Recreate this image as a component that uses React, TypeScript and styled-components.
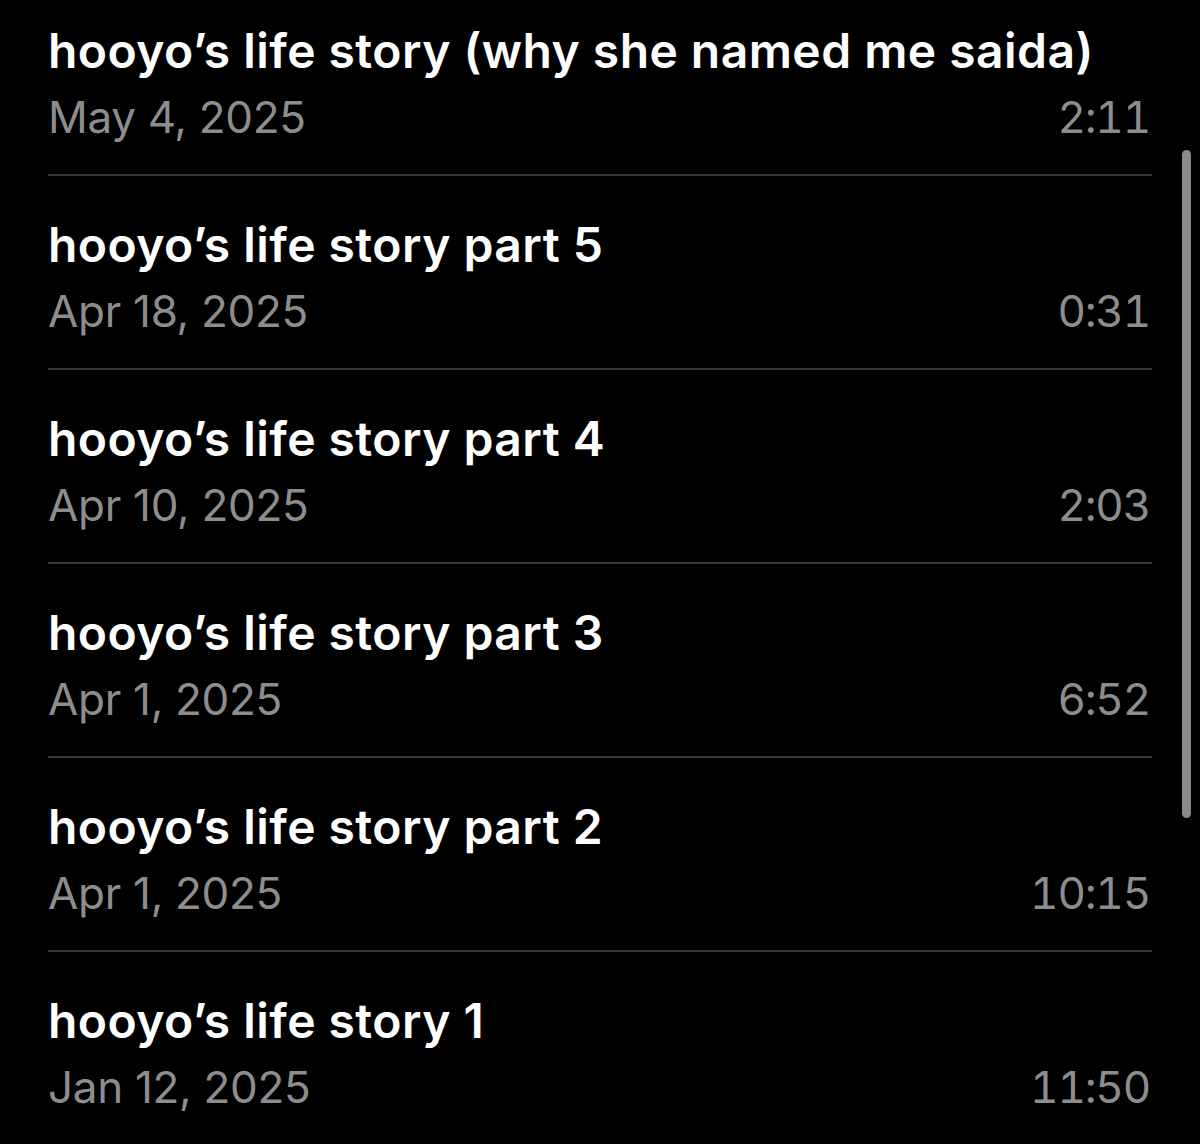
import React from "react";
import styled, { createGlobalStyle } from "styled-components";

const Global = createGlobalStyle`
  html, body { margin: 0; padding: 0; background: #000; }
  body { overflow: hidden; height: 1144px; font-family: Inter, "Noto Sans", sans-serif; }
`;

const Screen = styled.div`
  position: relative;
  width: 1200px;
  height: 1144px;
  background: #000;
  overflow: hidden;
`;

const List = styled.div`
  display: flex;
  flex-direction: column;
  margin-top: -18px;
  padding: 0 48px;
`;

const Row = styled.div`
  display: flex;
  flex-direction: column;
  height: 194px;
  box-sizing: border-box;
  padding-top: 39px;
  border-bottom: 2px solid #38383a;
`;

const Title = styled.div`
  color: #fff;
  font-size: 48px;
  font-weight: 600;
  line-height: 60px;
  letter-spacing: 0.45px;
  white-space: nowrap;
`;

const Meta = styled.div`
  display: flex;
  justify-content: space-between;
  align-items: baseline;
  color: #8d8d8f;
  font-size: 44px;
  font-weight: 400;
  line-height: 60px;
  margin-top: 6px;
  padding-right: 2px;
`;

const DateText = styled.span`
  letter-spacing: -0.3px;
`;

const Duration = styled.span`
  font-variant-numeric: tabular-nums;
  letter-spacing: -1.2px;
`;

const ScrollThumb = styled.div`
  position: absolute;
  left: 1182px;
  top: 150px;
  width: 9px;
  height: 668px;
  border-radius: 5px;
  background: #8a8a8a;
`;

const items = [
  { t: "hooyo’s life story (why she named me saida)", d: "May 4, 2025", l: "2:11" },
  { t: "hooyo’s life story part 5", d: "Apr 18, 2025", l: "0:31" },
  { t: "hooyo’s life story part 4", d: "Apr 10, 2025", l: "2:03" },
  { t: "hooyo’s life story part 3", d: "Apr 1, 2025", l: "6:52" },
  { t: "hooyo’s life story part 2", d: "Apr 1, 2025", l: "10:15" },
  { t: "hooyo’s life story 1", d: "Jan 12, 2025", l: "11:50" },
];

export default function App() {
  return (
    <Screen>
      <Global />
      <List>
        {items.map((it, i) => (
          <Row key={i}>
            <Title>{it.t}</Title>
            <Meta>
              <DateText>{it.d}</DateText>
              <Duration>{it.l}</Duration>
            </Meta>
          </Row>
        ))}
      </List>
      <ScrollThumb />
    </Screen>
  );
}
